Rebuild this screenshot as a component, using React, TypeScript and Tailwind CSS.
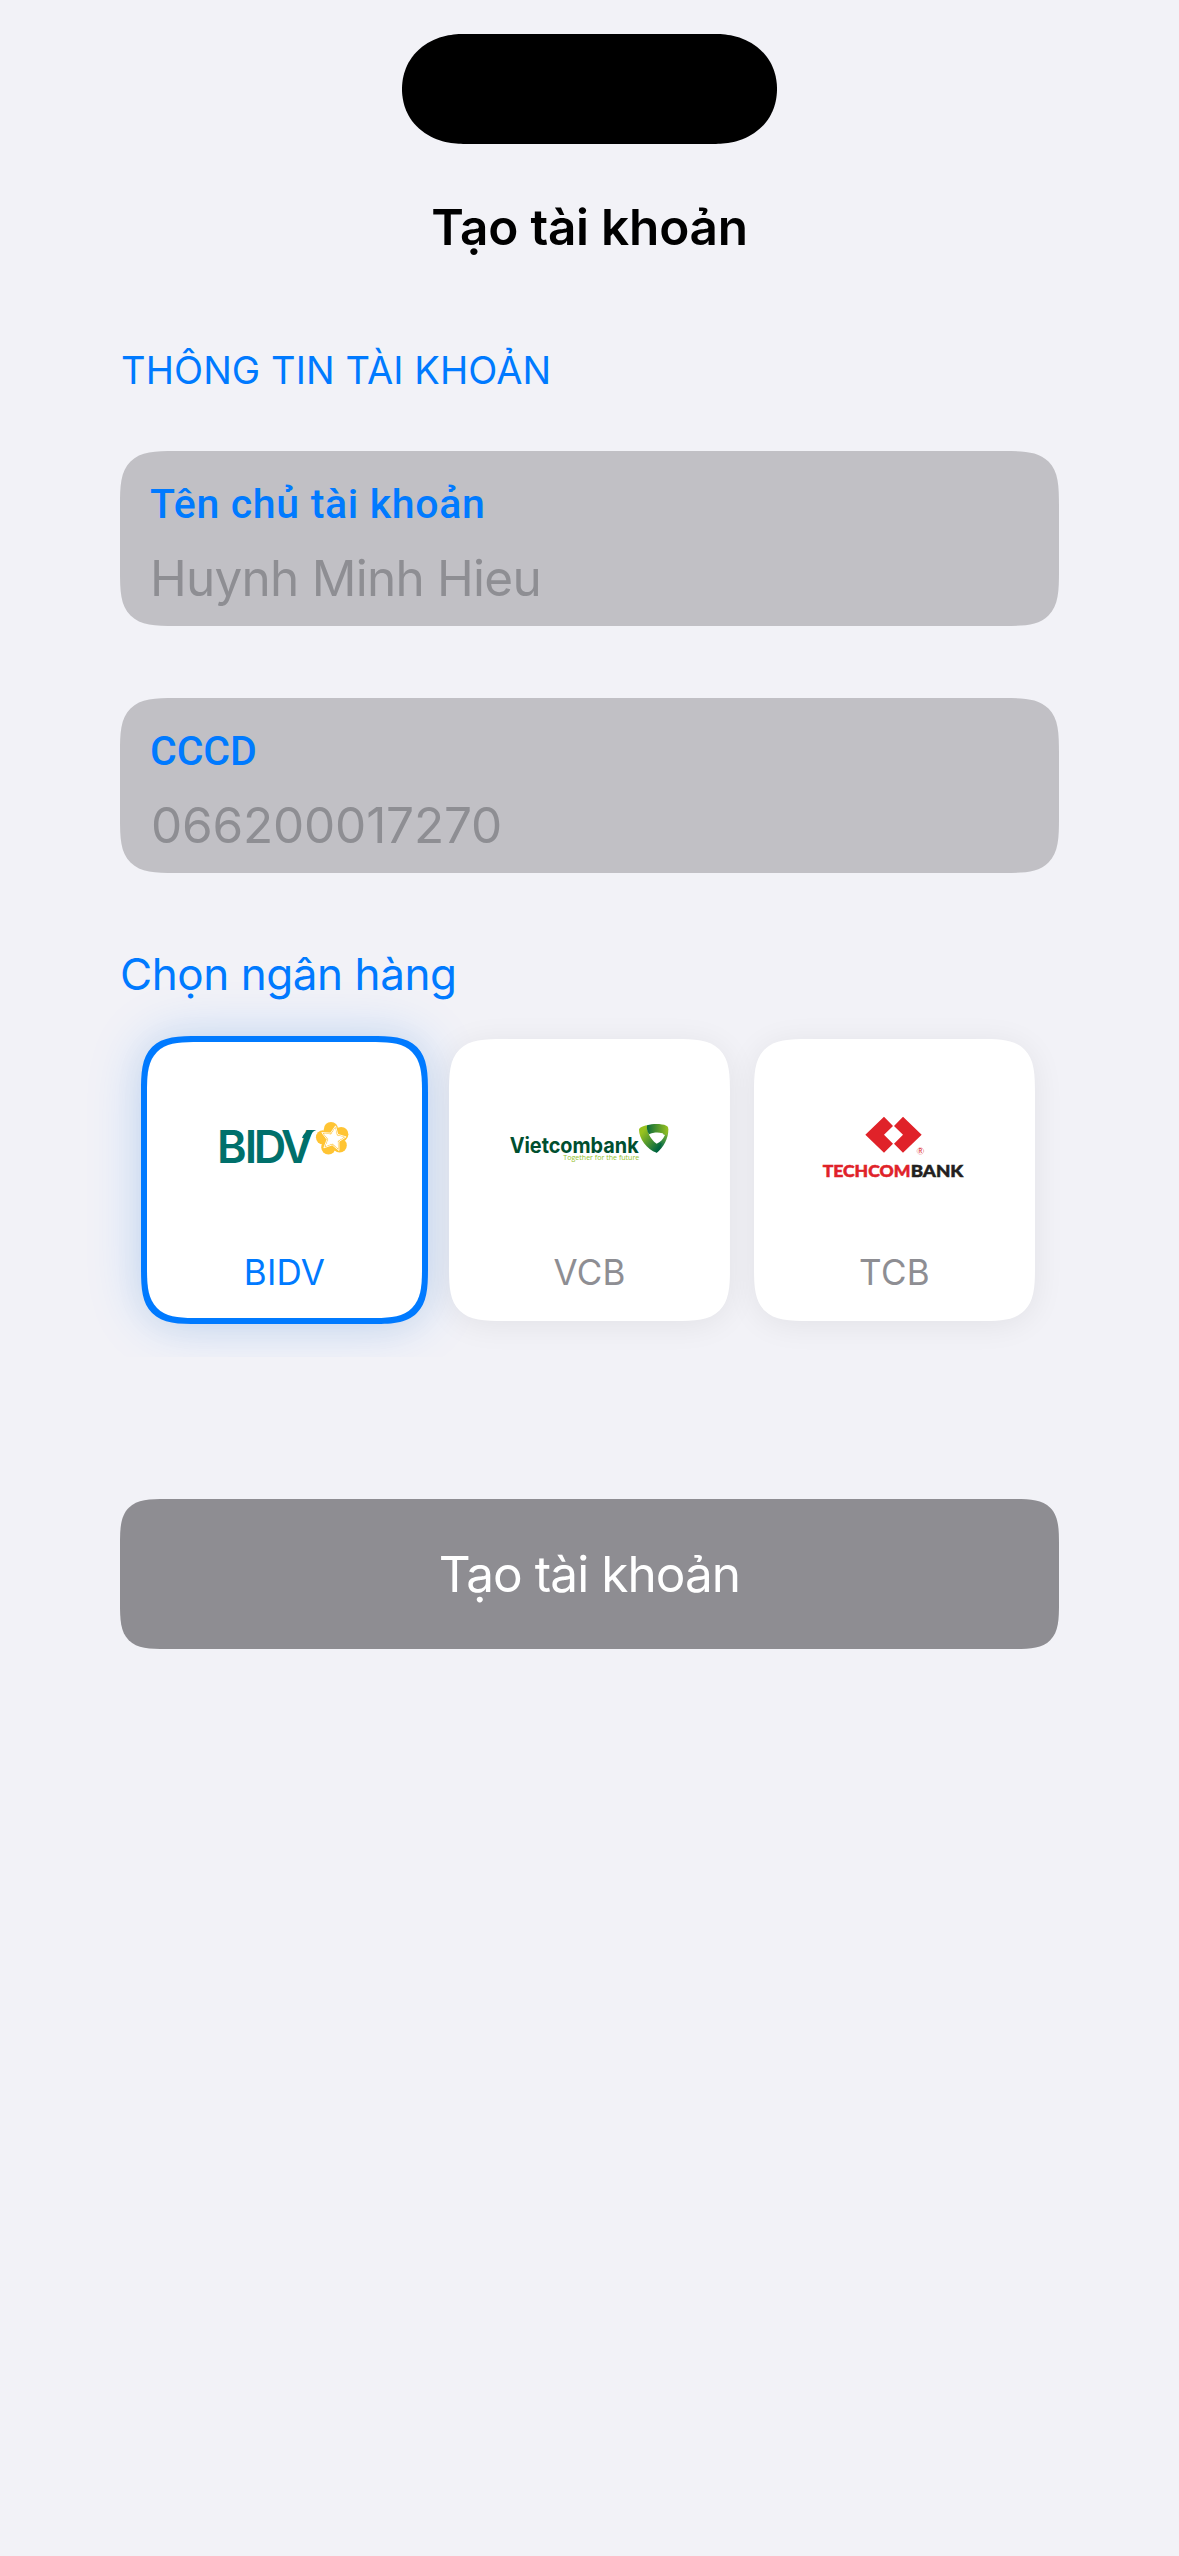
import React, { useState } from "react";
import clsx from "clsx";

function BidvLogo() {
  const petals = [-100, -28, 44, 116, 188];
  return (
    <svg className="h-[90px] w-[180px]" viewBox="-45 -30 540 270" aria-label="BIDV">
      <text x="21 104 131 213" y="158" fontFamily="Inter" fontWeight="600" fontSize="135" fill="#00706b">
        BIDV
      </text>
      <path d="M276 84C284 62 298 60 319 60C309 63 305 69 298 86Z" fill="#00706b" />
      <g fill="#ffc433">
        {petals.map((a) => (
          <circle
            key={a}
            cx={368 + 29 * Math.cos((a * Math.PI) / 180)}
            cy={86 + 29 * Math.sin((a * Math.PI) / 180)}
            r="21.5"
          />
        ))}
        <circle cx="368" cy="86" r="26" />
      </g>
      <g transform="translate(370 85) rotate(10)">
        <path
          d="M0 -38L11 -14L37 -11L18 7L23 33L0 20L-23 33L-18 7L-37 -11L-11 -14Z"
          fill="#ffc433"
          stroke="#fff"
          strokeWidth="2.5"
          strokeLinejoin="round"
        />
        <path d="M0 -29L8 -9L28 -8L13 5L17 25L0 14L-17 25L-13 5L-28 -8L-8 -9Z" fill="#fff" stroke="#fff" strokeWidth="3" strokeLinejoin="round" />
      </g>
    </svg>
  );
}

function VietcombankLogo() {
  return (
    <svg className="h-[90px] w-[180px]" viewBox="0 -30 540 270" aria-label="Vietcombank">
      <defs>
        <linearGradient id="vcbLeft" x1="0" y1="0" x2="1" y2="1">
          <stop offset="0.2" stopColor="#98c21f" />
          <stop offset="0.85" stopColor="#00663f" />
        </linearGradient>
        <linearGradient id="vcbTop" x1="0" y1="0" x2="1" y2="0">
          <stop offset="0" stopColor="#0b6a3a" />
          <stop offset="1" stopColor="#98c21f" />
        </linearGradient>
        <linearGradient id="vcbRight" x1="0.8" y1="0" x2="0.3" y2="1">
          <stop offset="0" stopColor="#8fbe2c" />
          <stop offset="0.6" stopColor="#1d7a46" />
          <stop offset="1" stopColor="#004f33" />
        </linearGradient>
      </defs>
      <text x="29" y="128" fontFamily="Inter" fontWeight="700" fontSize="64" textLength="387" lengthAdjust="spacingAndGlyphs" fill="#004f2f">
        Vietcombank
      </text>
      <text x="190" y="151" fontFamily="Open Sans" fontWeight="400" fontSize="20" textLength="228" lengthAdjust="spacingAndGlyphs" fill="#93c11f">
        Together for the future
      </text>
      <path d="M505 58C506 84 490 115 470 128L458 105C474 99 486 86 490 68C493 60 496 54 505 58Z" fill="url(#vcbRight)" />
      <path d="M441 46C428 48 418 53 417 59C417 84 440 119 470 128C480 120 482 112 485 99C466 99 440 80 441 46Z" fill="url(#vcbLeft)" />
      <path d="M441 46C459 41 484 41 499 47C505 49 506 55 504 62L500 76C486 66 464 65 447 73C441 64 440 55 441 46Z" fill="url(#vcbTop)" />
      <path d="M448 74C462 67 482 67 495 75C489 89 481 96 470 101C460 94 453 85 448 74Z" fill="#fff" />
    </svg>
  );
}

function TechcombankLogo() {
  return (
    <svg className="h-[90px] w-[180px]" viewBox="-15 0 540 270" aria-label="Techcombank">
      <g fill="#e02229">
        <path d="M222 50L249 78L222 104L249 131L222 158L166 104Z" />
        <path d="M279 50L335 104L279 158L252 131L279 104L252 78Z" />
      </g>
      <circle cx="331" cy="153" r="10" fill="none" stroke="#ea7a7e" strokeWidth="1.8" strokeDasharray="5 2" />
      <text x="331" y="159.500" textAnchor="middle" fontFamily="Inter" fontWeight="600" fontSize="17" fill="#e0454a">
        R
      </text>
      <text x="38" y="230" fontFamily="Lato" fontWeight="900" fontSize="50" textLength="263" lengthAdjust="spacingAndGlyphs" fill="#e02229" stroke="#e02229" strokeWidth="1.5">
        TECHCOM
      </text>
      <text x="302" y="230" fontFamily="Lato" fontWeight="900" fontSize="50" textLength="158" lengthAdjust="spacingAndGlyphs" fill="#231f20" stroke="#231f20" strokeWidth="1.5">
        BANK
      </text>
    </svg>
  );
}

const banks = [
  { code: "BIDV", Logo: BidvLogo },
  { code: "VCB", Logo: VietcombankLogo },
  { code: "TCB", Logo: TechcombankLogo },
];

function Field({ label, value, labelClass, valueClass }: { label: string; value: string; labelClass: string; valueClass: string }) {
  return (
    <div className="flex h-[175px] flex-col rounded-[55px] bg-[#c1c0c5] pt-7 [corner-shape:superellipse(1.71)]">
      <span className={clsx("pl-[30px] font-['Roboto',sans-serif] text-[41px] leading-[50px] font-medium text-[#007aff]", labelClass)}>{label}</span>
      <span className={clsx("mt-[19px] text-[49.5px] leading-[60px] text-[#8e8e93]", valueClass)}>{value}</span>
    </div>
  );
}

export default function App() {
  const [selected, setSelected] = useState("BIDV");
  return (
    <div className="flex h-[2556px] w-[1179px] flex-col overflow-hidden bg-[#f2f2f7] px-[120px] font-['Inter',sans-serif]">
      <div className="mt-[34px] h-[110px] w-[375px] shrink-0 self-center rounded-[61px/55px] bg-black [corner-shape:superellipse(1.08)]" />

      <h1 className="mt-[53px] text-center text-[49.5px] leading-[60px] font-semibold tracking-[-0.22px] text-black">Tạo tài khoản</h1>

      <h2 className="mt-[89px] pl-px text-[38px] leading-[48px] tracking-[0.1px] text-[#007aff]">THÔNG TIN TÀI KHOẢN</h2>

      <div className="mt-[57px] flex flex-col gap-[72px]">
        <Field label="Tên chủ tài khoản" value="Huynh Minh Hieu" labelClass="tracking-[0.68px]" valueClass="pl-[30px] tracking-[-0.76px]" />
        <Field label="CCCD" value="066200017270" labelClass="tracking-[-0.1px]" valueClass="pl-[31px] tracking-[-0.19px]" />
      </div>

      <h3 className="mt-[74px] text-[44px] leading-[54px] tracking-[-0.44px] text-[#007aff]">Chọn ngân hàng</h3>

      <div className="flex h-[356px] gap-[24px] px-[24px] pt-[38px] [clip-path:inset(-100px_-120px_0_-120px)]">
        {banks.map(({ code, Logo }) => {
          const active = code === selected;
          return (
            <button
              key={code}
              type="button"
              onClick={() => setSelected(code)}
              className={clsx(
                "flex flex-col items-center bg-white [corner-shape:superellipse(1.71)]",
                active
                  ? "-m-[3px] h-[288px] w-[287px] rounded-[58px] border-[6px] border-[#007aff] pt-[58px] shadow-[0_0_56px_rgba(0,122,255,0.2),0_3px_32px_rgba(0,0,0,0.05)]"
                  : "h-[282px] w-[281px] rounded-[55px] pt-[61px] shadow-[0_4px_32px_rgba(0,0,0,0.07)]",
              )}
            >
              <Logo />
              <span className={clsx("mt-[60px] text-[35px] leading-[44px] tracking-[0.25px]", active ? "text-[#007aff]" : "text-[#8e8e93]")}>
                {code}
              </span>
            </button>
          );
        })}
      </div>

      <button
        type="button"
        className="mt-[142px] h-[150px] shrink-0 rounded-[46px] bg-[#8e8d92] text-center text-[49.5px] leading-[60px] tracking-[-0.94px] text-white [corner-shape:superellipse(1.71)]"
      >
        Tạo tài khoản
      </button>
    </div>
  );
}
